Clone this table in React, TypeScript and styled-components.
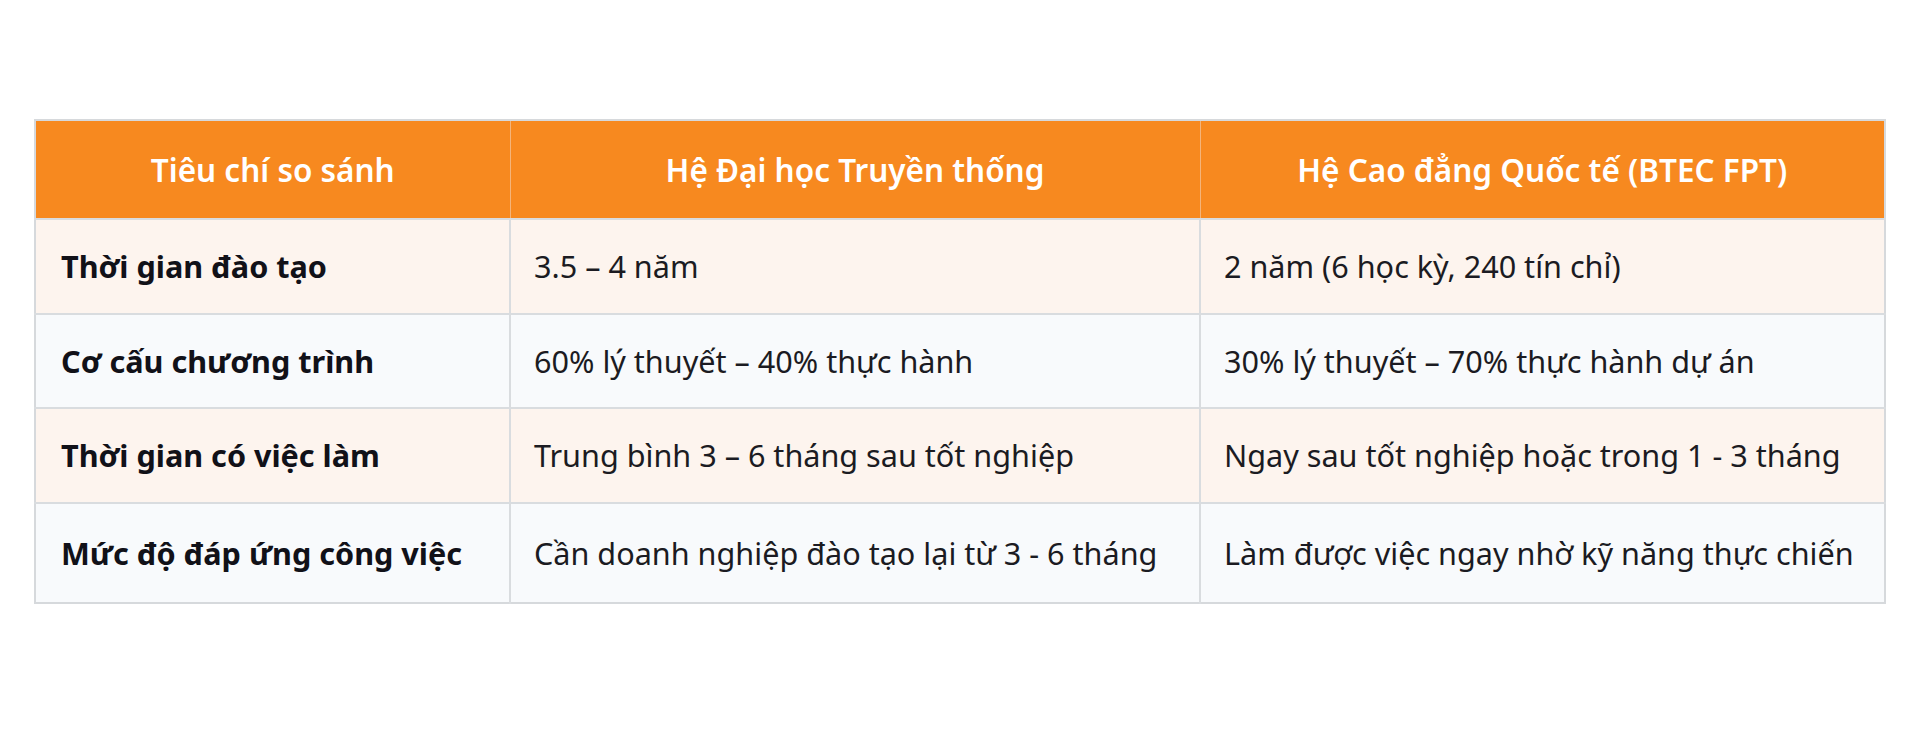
import React from "react"
import styled, { createGlobalStyle } from "styled-components"

const GlobalStyle = createGlobalStyle`
    html, body {
        margin: 0;
        padding: 0;
        background: #ffffff;
    }
    body {
        font-family: "Noto Sans", "Open Sans", sans-serif;
        color: #15151c;
    }
`

const Page = styled.div`
    width: 1920px;
    height: 754px;
    padding: 119px 34px 0;
    box-sizing: border-box;
`

const Table = styled.table`
    width: 100%;
    border-collapse: collapse;
    table-layout: fixed;
    border: 2px solid #d6d9dc;
`

const HeadCell = styled.th`
    height: 97px;
    padding: 0 24px;
    background: #f7891f;
    color: #ffffff;
    font-size: 31.5px;
    font-weight: 600;
    text-align: center;
    white-space: nowrap;
    border-left: 1px solid #f4b47a;
    &:first-child {
        border-left: none;
    }
`

const Row = styled.tr<{ $tinted: boolean; $tall?: boolean }>`
    height: ${(p) => (p.$tall ? "100px" : "94.6px")};
    background: ${(p) => (p.$tinted ? "#fdf4ee" : "#f8fafc")};
    border-top: 2px solid #d9dcdf;
`

const Cell = styled.td<{ $label?: boolean }>`
    padding: 0 20px 0 ${(p) => (p.$label ? "25px" : "23px")};
    font-size: 30.6px;
    font-weight: ${(p) => (p.$label ? 700 : 400)};
    color: ${(p) => (p.$label ? "#111118" : "#1b1b22")};
    border-left: 2px solid #d9dcdf;
    white-space: nowrap;
    &:first-child {
        border-left: none;
    }
`

const headers = ["Tiêu chí so sánh", "Hệ Đại học Truyền thống", "Hệ Cao đẳng Quốc tế (BTEC FPT)"]

const rows = [
    ["Thời gian đào tạo", "3.5 – 4 năm", "2 năm (6 học kỳ, 240 tín chỉ)"],
    ["Cơ cấu chương trình", "60% lý thuyết – 40% thực hành", "30% lý thuyết – 70% thực hành dự án"],
    ["Thời gian có việc làm", "Trung bình 3 – 6 tháng sau tốt nghiệp", "Ngay sau tốt nghiệp hoặc trong 1 - 3 tháng"],
    ["Mức độ đáp ứng công việc", "Cần doanh nghiệp đào tạo lại từ 3 - 6 tháng", "Làm được việc ngay nhờ kỹ năng thực chiến"],
]

function App() {
    return (
        <>
            <GlobalStyle />
            <Page>
                <Table>
                    <colgroup>
                        <col style={{ width: 475 }} />
                        <col style={{ width: 690 }} />
                        <col />
                    </colgroup>
                    <thead>
                        <tr>
                            {headers.map((h) => (
                                <HeadCell key={h}>{h}</HeadCell>
                            ))}
                        </tr>
                    </thead>
                    <tbody>
                        {rows.map((r, i) => (
                            <Row key={r[0]} $tinted={i % 2 === 0} $tall={i === rows.length - 1}>
                                <Cell $label>{r[0]}</Cell>
                                <Cell>{r[1]}</Cell>
                                <Cell>{r[2]}</Cell>
                            </Row>
                        ))}
                    </tbody>
                </Table>
            </Page>
        </>
    )
}

export default App
